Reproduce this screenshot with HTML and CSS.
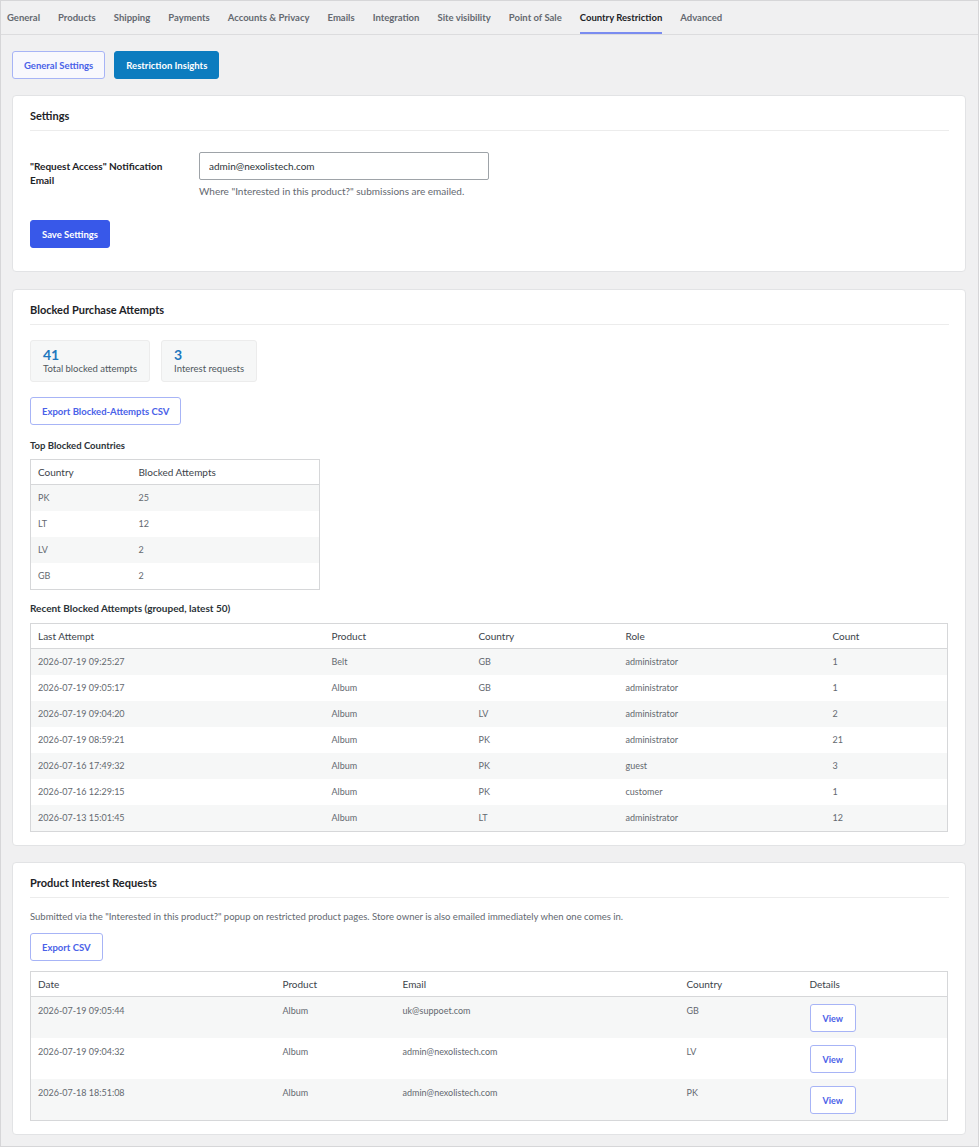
FILE: index.html
```html
<!DOCTYPE html>
<html>
  <head>
    <meta charset="UTF-8">
    <title>Country Restriction</title>
    <link rel="stylesheet" href="styles.css">
  </head>
  <body>
    <div class="wrap">
      <nav class="tabs">
        <a class="tab">General</a>
        <a class="tab">Products</a>
        <a class="tab">Shipping</a>
        <a class="tab">Payments</a>
        <a class="tab">Accounts &amp; Privacy</a>
        <a class="tab">Emails</a>
        <a class="tab">Integration</a>
        <a class="tab">Site visibility</a>
        <a class="tab">Point of Sale</a>
        <a class="tab active">Country Restriction</a>
        <a class="tab">Advanced</a>
      </nav>

      <div class="content">
        <div class="subtabs">
          <button class="btn btn-outline btn-page">General Settings</button>
          <button class="btn btn-insights">Restriction Insights</button>
        </div>

        <div class="card card-settings">
          <h2 class="card-title">Settings</h2>
          <div class="form-row">
            <label class="form-label" for="notify-email">"Request Access" Notification Email</label>
            <div class="form-field">
              <input type="text" id="notify-email" class="text-input" value="admin@nexolistech.com">
              <p class="help">Where "Interested in this product?" submissions are emailed.</p>
            </div>
          </div>
          <button class="btn btn-primary">Save Settings</button>
        </div>

        <div class="card">
          <h2 class="card-title">Blocked Purchase Attempts</h2>
          <div class="stats">
            <div class="stat">
              <span class="stat-num">41</span>
              <span class="stat-label">Total blocked attempts</span>
            </div>
            <div class="stat">
              <span class="stat-num">3</span>
              <span class="stat-label">Interest requests</span>
            </div>
          </div>
          <button class="btn btn-outline">Export Blocked-Attempts CSV</button>

          <h3 class="subhead">Top Blocked Countries</h3>
          <table class="data-table countries">
            <colgroup><col class="c-country"><col></colgroup>
            <thead>
              <tr><th>Country</th><th>Blocked Attempts</th></tr>
            </thead>
            <tbody>
              <tr><td>PK</td><td>25</td></tr>
              <tr><td>LT</td><td>12</td></tr>
              <tr><td>LV</td><td>2</td></tr>
              <tr><td>GB</td><td>2</td></tr>
            </tbody>
          </table>

          <h3 class="subhead second">Recent Blocked Attempts (grouped, latest 50)</h3>
          <table class="data-table full">
            <colgroup>
              <col class="r-date"><col class="r-product"><col class="r-country"><col class="r-role"><col>
            </colgroup>
            <thead>
              <tr><th>Last Attempt</th><th>Product</th><th>Country</th><th>Role</th><th>Count</th></tr>
            </thead>
            <tbody>
              <tr><td>2026-07-19 09:25:27</td><td>Belt</td><td>GB</td><td>administrator</td><td>1</td></tr>
              <tr><td>2026-07-19 09:05:17</td><td>Album</td><td>GB</td><td>administrator</td><td>1</td></tr>
              <tr><td>2026-07-19 09:04:20</td><td>Album</td><td>LV</td><td>administrator</td><td>2</td></tr>
              <tr><td>2026-07-19 08:59:21</td><td>Album</td><td>PK</td><td>administrator</td><td>21</td></tr>
              <tr><td>2026-07-16 17:49:32</td><td>Album</td><td>PK</td><td>guest</td><td>3</td></tr>
              <tr><td>2026-07-16 12:29:15</td><td>Album</td><td>PK</td><td>customer</td><td>1</td></tr>
              <tr><td>2026-07-13 15:01:45</td><td>Album</td><td>LT</td><td>administrator</td><td>12</td></tr>
            </tbody>
          </table>
        </div>

        <div class="card">
          <h2 class="card-title">Product Interest Requests</h2>
          <p class="desc">Submitted via the "Interested in this product?" popup on restricted product pages. Store owner is also emailed immediately when one comes in.</p>
          <button class="btn btn-outline">Export CSV</button>
          <table class="data-table full requests">
            <colgroup>
              <col class="q-date"><col class="q-product"><col class="q-email"><col class="q-country"><col>
            </colgroup>
            <thead>
              <tr><th>Date</th><th>Product</th><th>Email</th><th>Country</th><th>Details</th></tr>
            </thead>
            <tbody>
              <tr><td>2026-07-19 09:05:44</td><td>Album</td><td>uk@suppoet.com</td><td>GB</td><td><button class="btn btn-outline btn-view">View</button></td></tr>
              <tr><td>2026-07-19 09:04:32</td><td>Album</td><td>admin@nexolistech.com</td><td>LV</td><td><button class="btn btn-outline btn-view">View</button></td></tr>
              <tr><td>2026-07-18 18:51:08</td><td>Album</td><td>admin@nexolistech.com</td><td>PK</td><td><button class="btn btn-outline btn-view">View</button></td></tr>
            </tbody>
          </table>
        </div>
      </div>
    </div>
  </body>
</html>
```

FILE: styles.css
```css
* {
  box-sizing: border-box;
}
body {
  margin: 0;
  background: #f0f0f1;
  font-family: Lato, "Open Sans", sans-serif;
  color: #1d2327;
}
.wrap {
  height: 1147px;
  border: 1px solid #d6d6d8;
}

/* top tabs */
.tabs {
  display: flex;
  padding-left: 6px;
  border-bottom: 1px solid #dcdcde;
}
.tab {
  padding: 10px 0 7px;
  margin-right: 18px;
  font-size: 9.5px;
  line-height: 14px;
  font-weight: 700;
  color: #646970;
  border-bottom: 2px solid transparent;
}
.tab.active {
  color: #1d2327;
  border-bottom-color: #7a8cf0;
}

.content {
  padding: 16px 12px 0 11px;
}
.subtabs {
  display: flex;
  gap: 9px;
  margin-bottom: 16px;
}

/* buttons */
.btn {
  height: 28px;
  padding: 0 11px;
  font-family: inherit;
  font-size: 9.5px;
  font-weight: 700;
  border-radius: 3px;
  cursor: pointer;
}
.btn-outline {
  background: #fff;
  color: #4a62e8;
  border: 1px solid #a7b4f6;
}
.btn-page {
  background: #f8f8fd;
}
.btn-insights {
  background: #0c7cbf;
  color: #fff;
  border: 1px solid #0c7cbf;
}
.btn-primary {
  background: #3858e9;
  color: #fff;
  border: 1px solid #3858e9;
  margin-top: 23px;
}

/* cards */
.card {
  background: #fff;
  border: 1px solid #e2e3e5;
  border-radius: 4px;
  padding: 0 16px 13px 17px;
  margin-bottom: 16px;
}
.card-settings {
  padding-bottom: 23px;
  margin-bottom: 17px;
}
.card-title {
  margin: 0 0 15px;
  padding: 12px 0 7px;
  font-size: 11px;
  line-height: 15px;
  font-weight: 700;
  border-bottom: 1px solid #ececec;
}

/* settings form */
.form-row {
  display: grid;
  grid-template-columns: 169px 290px;
  margin-top: 21px;
}
.form-label {
  padding-top: 7px;
  padding-right: 20px;
  font-size: 10px;
  line-height: 14px;
  font-weight: 700;
}
.text-input {
  width: 290px;
  height: 28px;
  padding: 0 9px;
  border: 1px solid #9ea3a8;
  border-radius: 2px;
  font-family: inherit;
  font-size: 10px;
  color: #2c3338;
}
.help {
  margin: 5px 0 0;
  font-size: 10px;
  line-height: 12px;
  color: #646970;
  white-space: nowrap;
}

/* stats */
.stats {
  display: flex;
  gap: 11px;
  margin-bottom: 15px;
}
.stat {
  display: flex;
  flex-direction: column;
  padding: 5px 12px 6px;
  background: #f6f7f7;
  border: 1px solid #ececec;
  border-radius: 3px;
}
.stat-num {
  font-size: 14px;
  line-height: 17px;
  font-weight: 700;
  color: #1f78be;
}
.stat-label {
  font-size: 9.5px;
  line-height: 12px;
  color: #50575e;
}

.subhead {
  margin: 15px 0 7px;
  font-size: 9.5px;
  line-height: 12px;
  font-weight: 700;
  color: #2c3338;
}
.subhead.second {
  margin: 12px 0 9px;
  font-size: 10px;
}

/* tables */
.data-table {
  border-collapse: collapse;
  border: 1px solid #d6d7d9;
  table-layout: fixed;
}
.data-table th {
  text-align: left;
  font-weight: 400;
  font-size: 10px;
  line-height: 15px;
  padding: 5px 7px 4px;
  color: #3c434a;
  border-bottom: 1px solid #d6d7d9;
}
.data-table td {
  font-size: 9px;
  line-height: 14px;
  padding: 6px 7px;
  color: #646970;
}
.data-table tbody tr:nth-child(odd) {
  background: #f6f7f7;
}
.countries {
  width: 290px;
}
.c-country {
  width: 101px;
}
.full {
  width: 918px;
}
.r-date { width: 294px; }
.r-product { width: 147px; }
.r-country { width: 147px; }
.r-role { width: 207px; }

.desc {
  margin: -2px 0 10px;
  font-size: 9.5px;
  line-height: 12px;
  color: #646970;
}
.requests {
  margin-top: 10px;
}
.q-date { width: 245px; }
.q-product { width: 120px; }
.q-email { width: 284px; }
.q-country { width: 123px; }
.requests td {
  vertical-align: top;
  padding: 7px 7px 6px;
}
.btn-view {
  padding: 0 12px;
  font-size: 9px;
}
```
